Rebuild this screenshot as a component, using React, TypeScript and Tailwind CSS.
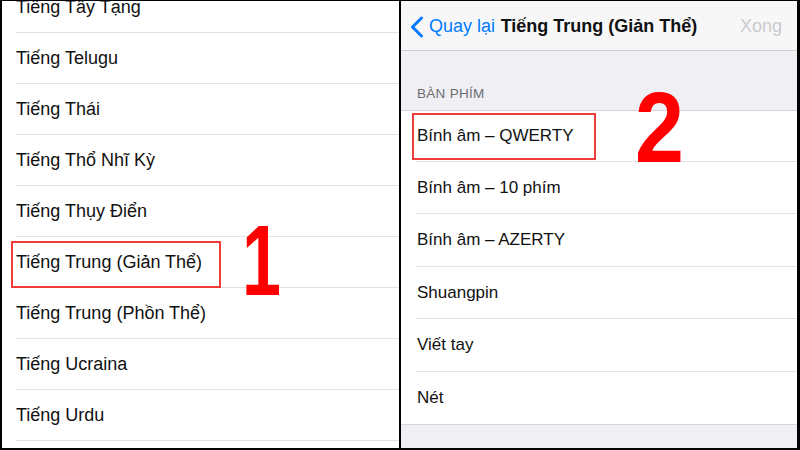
import React from "react";

const leftRows = [
  "Tiếng Tây Tạng",
  "Tiếng Telugu",
  "Tiếng Thái",
  "Tiếng Thổ Nhĩ Kỳ",
  "Tiếng Thụy Điển",
  "Tiếng Trung (Giản Thể)",
  "Tiếng Trung (Phồn Thể)",
  "Tiếng Ucraina",
  "Tiếng Urdu",
  "",
];

const rightRows: { label: string; h: string; last?: boolean }[] = [
  { label: "Bính âm – QWERTY", h: "h-[51px]" },
  { label: "Bính âm – 10 phím", h: "h-[52px]" },
  { label: "Bính âm – AZERTY", h: "h-[53px]" },
  { label: "Shuangpin", h: "h-[52px]" },
  { label: "Viết tay", h: "h-[53px]" },
  { label: "Nét", h: "h-[52px]", last: true },
];

const font = "font-['Liberation_Sans',Arial,sans-serif]";

export default function App() {
  return (
    <div
      className={`w-[800px] h-[450px] bg-black flex gap-[2px] pt-[1px] pb-[2px] pl-[2px] pr-[3px] overflow-hidden ${font}`}
    >
      {/* Left panel */}
      <div className="relative w-[397px] h-full bg-white overflow-hidden">
        <div className="mt-[-19px] flex flex-col">
          {leftRows.map((r, i) => (
            <div key={i} className="pl-[14px]">
              <div className="h-[51px] border-b border-[#e2e2e2] flex items-center text-[18px] text-[#111]">
                {r}
              </div>
            </div>
          ))}
        </div>
        <div className="absolute left-[9px] top-[240px] w-[210px] h-[47px] border-2 border-[#f03b3b]" />
        <span className="absolute left-[240px] top-[209px] text-[100px] leading-none font-bold text-[#ff0000] origin-left scale-x-[0.7]">
          1
        </span>
      </div>

      {/* Right panel */}
      <div className="relative flex-1 h-full bg-[#efeff4] overflow-hidden flex flex-col">
        <div className="h-[50px] bg-[#f7f7f7] border-b border-[#cfcfd2] grid grid-cols-[1fr_auto_1fr] items-center pt-[2px]">
          <div className="flex items-center pl-[9px]">
            <svg width="14" height="22" viewBox="0 0 14 22" fill="none">
              <path d="M11.5 2 L2.5 11 L11.5 20" stroke="#007aff" strokeWidth="3" strokeLinecap="round" strokeLinejoin="round" />
            </svg>
            <span className="ml-[5px] text-[18px] text-[#007aff]">Quay lại</span>
          </div>
          <div className="text-[18px] font-bold text-[#111] px-[4px]">Tiếng Trung (Giản Thể)</div>
          <div className="flex justify-end pr-[15px] text-[18px] text-[#cbcbcf]">Xong</div>
        </div>
        <div className="h-[59px] flex items-end pl-[16px] pb-[6px] text-[13.5px] tracking-[0.3px] text-[#6d6d72]">
          BÀN PHÍM
        </div>
        <div className="bg-white border-t border-[#d6d6da] flex flex-col">
          {rightRows.map((r, i) => (
            <div key={i} className={r.last ? "border-b border-[#d6d6da]" : "pl-[15px]"}>
              <div
                className={`${r.h} ${r.last ? "pl-[16px]" : "pl-[1px] border-b border-[#e2e2e2]"} flex items-center text-[17px] text-[#111]`}
              >
                {r.label}
              </div>
            </div>
          ))}
        </div>
        <div className="absolute left-[11px] top-[112px] w-[184px] h-[47px] border-2 border-[#f03b3b]" />
        <span className="absolute left-[234px] top-[76px] text-[100px] leading-none font-bold text-[#ff0000] origin-left scale-x-[0.88]">
          2
        </span>
      </div>
    </div>
  );
}
